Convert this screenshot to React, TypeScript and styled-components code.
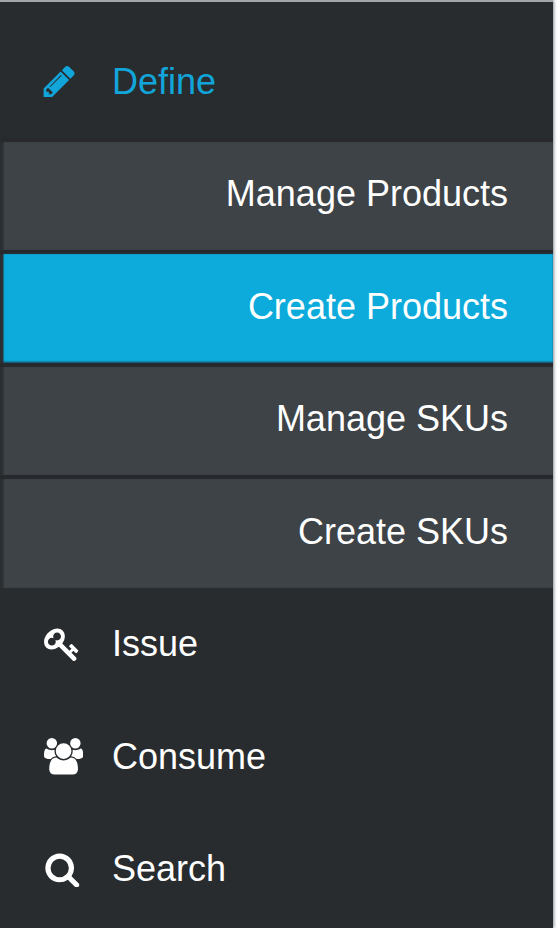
import React from "react";
import styled, { createGlobalStyle } from "styled-components";

const GlobalStyle = createGlobalStyle`
  html, body {
    margin: 0;
    padding: 0;
    background: #fff;
    font-family: "Liberation Sans", Arial, sans-serif;
  }
`;

const PATHS = {
  pencil:
    "M491 1536l91-91-235-235-91 91v107h128v128h107zm523-928q0-22-22-22-10 0-17 7l-542 542q-7 7-7 17 0 22 22 22 10 0 17-7l542-542q7-7 7-17zm-54-192l416 416-832 832h-416v-416zm683 96q0 53-37 90l-166 166-416-416 166-165q36-38 90-38 53 0 91 38l235 234q37 39 37 91z",
  key: "M832 512q0-80-56-136t-136-56-136 56-56 136q0 42 19 83-41-19-83-19-80 0-136 56t-56 136 56 136 136 56 136-56 56-136q0-42-19-83 41 19 83 19 80 0 136-56t56-136zm851 704q0 17-49 66t-66 49q-9 0-28.5-16t-36.5-33-38.5-40-24.5-26l-96 96 220 220q28 28 28 68 0 42-39 81t-81 39q-40 0-68-28l-671-671q-176 131-365 131-163 0-265.5-102.5t-102.5-265.5q0-160 95-313t248-248 313-95q163 0 265.5 102.5t102.5 265.5q0 189-131 365l355 355 96-96q-3-3-26-24.5t-40-38.5-33-36.5-16-28.5q0-17 49-66t66-49q13 0 23 10 6 6 46 44.5t82 79.5 86.5 86 73 78 28.5 41z",
  users:
    "M593 896q-162 5-265 128h-134q-82 0-138-40.5t-56-118.5q0-353 124-353 6 0 43.5 21t97.5 42.5 119 21.5q67 0 133-23-5 37-5 66 0 139 81 256zm1071 637q0 120-73 189.5t-194 69.5h-874q-121 0-194-69.5t-73-189.5q0-53 3.5-103.5t14-109 26.5-108.5 43-97.5 62-81 85.5-53.5 111.5-20q10 0 43 21.5t73 48 107 48 135 21.5 135-21.5 107-48 73-48 43-21.5q61 0 111.5 20t85.5 53.5 62 81 43 97.5 26.5 108.5 14 109 3.5 103.5zm-1024-1277q0 106-75 181t-181 75-181-75-75-181 75-181 181-75 181 75 75 181zm704 384q0 159-112.5 271.5t-271.5 112.5-271.5-112.5-112.5-271.5 112.5-271.5 271.5-112.5 271.5 112.5 112.5 271.5zm576 225q0 78-56 118.5t-138 40.5h-134q-103-123-265-128 81-117 81-256 0-29-5-66 66 23 133 23 59 0 119-21.5t97.5-42.5 43.5-21q124 0 124 353zm-128-609q0 106-75 181t-181 75-181-75-75-181 75-181 181-75 181 75 75 181z",
  search:
    "M1216 832q0-185-131.5-316.5t-316.5-131.5-316.5 131.5-131.5 316.5 131.5 316.5 316.5 131.5 316.5-131.5 131.5-316.5zm512 832q0 52-38 90t-90 38q-54 0-90-38l-343-342q-179 124-399 124-143 0-273.5-55.5t-225-150-150-225-55.5-273.5 55.5-273.5 150-225 225-150 273.5-55.5 273.5 55.5 225 150 150 225 55.5 273.5q0 220-124 399l343 343q37 37 37 90z",
};

type IconName = keyof typeof PATHS;

const subItems = [
  { label: "Manage Products" },
  { label: "Create Products", active: true },
  { label: "Manage SKUs" },
  { label: "Create SKUs" },
];

const Icon = ({ name }: { name: IconName }) => (
  <IconSvg viewBox={name === "users" ? "0 0 1920 1792" : "0 0 1792 1792"}>
    <path d={PATHS[name]} fill="currentColor" />
  </IconSvg>
);

const App = () => {
  return (
    <>
      <GlobalStyle />
      <Sidebar>
        <MenuItem $current>
          <IconSlot $nudge>
            <Icon name="pencil" />
          </IconSlot>
          Define
        </MenuItem>
        <SubList>
          {subItems.map((item) => (
            <SubItem key={item.label} $active={item.active}>
              {item.label}
            </SubItem>
          ))}
        </SubList>
        <MenuItem>
          <IconSlot>
            <Icon name="key" />
          </IconSlot>
          Issue
        </MenuItem>
        <MenuItem>
          <IconSlot>
            <Icon name="users" />
          </IconSlot>
          Consume
        </MenuItem>
        <MenuItem>
          <IconSlot>
            <Icon name="search" />
          </IconSlot>
          Search
        </MenuItem>
      </Sidebar>
    </>
  );
};

export default App;

const Sidebar = styled.nav`
  box-sizing: border-box;
  width: 553px;
  height: 928px;
  padding-top: 23px;
  background: #282c2f;
  border-top: 2px solid #a3a5a6;
  box-shadow: 1px 0 3px #8b8f92;
  overflow: hidden;
`;

const MenuItem = styled.div<{ $current?: boolean }>`
  box-sizing: border-box;
  display: flex;
  align-items: center;
  height: 112.5px;
  padding: 0.5px 0 0 43.5px;
  font-size: 36px;
  color: ${(p) => (p.$current ? "#12a5da" : "#fff")};
`;

const IconSlot = styled.span<{ $nudge?: boolean }>`
  display: flex;
  align-items: center;
  width: 68.5px;
  margin-left: ${(p) => (p.$nudge ? "-2.5px" : "0")};
  padding-right: ${(p) => (p.$nudge ? "2.5px" : "0")};
  box-sizing: content-box;
`;

const IconSvg = styled.svg`
  height: 36.6px;
  width: auto;
  display: block;
`;

const SubList = styled.div`
  display: flex;
  flex-direction: column;
`;

const SubItem = styled.div<{ $active?: boolean }>`
  box-sizing: border-box;
  display: flex;
  align-items: center;
  justify-content: flex-end;
  height: 112.5px;
  padding: 0.5px 45px 0 0;
  font-size: 36px;
  color: #fff;
  background: ${(p) => (p.$active ? "#0cabdb" : "#3d4347")};
  box-shadow: inset 0 4px 1px #27292c, inset 3.5px 0 1px #2c2f33
    ${(p) => (p.$active ? ", inset 0 -1.5px 1px #14627f" : "")};
`;
